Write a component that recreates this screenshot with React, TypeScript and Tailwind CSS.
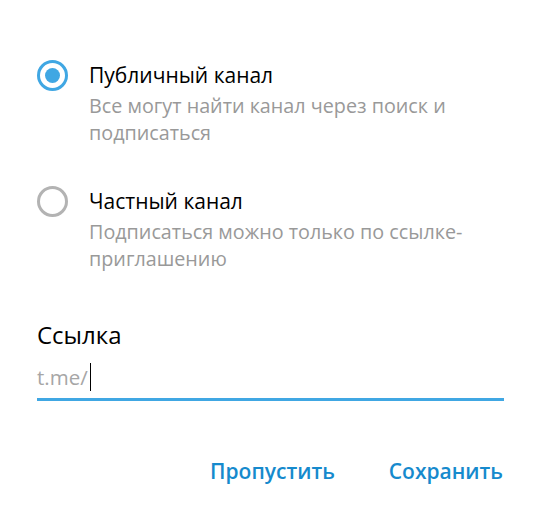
import React from "react";

function Radio({ checked }: { checked: boolean }) {
  return checked ? (
    <div className="w-[31px] h-[31px] rounded-full border-[3px] border-[#40a7e3] flex items-center justify-center shrink-0">
      <div className="w-[15px] h-[15px] rounded-full bg-[#40a7e3]" />
    </div>
  ) : (
    <div className="w-[31px] h-[31px] rounded-full border-[3px] border-[#b3b3b3] shrink-0" />
  );
}

function Option({ checked, title, desc }: { checked: boolean; title: string; desc: string }) {
  return (
    <div className="flex items-start gap-[21px]">
      <Radio checked={checked} />
      <div className="flex flex-col">
        <div className="text-[21px] leading-[31px] text-black">{title}</div>
        <div className="mt-[1px] text-[19.75px] leading-[27px] text-[#999999]">{desc}</div>
      </div>
    </div>
  );
}

export default function App() {
  return (
    <div
      className="w-[533px] h-[512px] bg-white flex flex-col pl-[37px] pr-[29px] pt-[60px]"
      style={{ fontFamily: '"Open Sans", sans-serif' }}
    >
      <div className="flex flex-col gap-[40px] pr-[40px]">
        <Option
          checked
          title="Публичный канал"
          desc="Все могут найти канал через поиск и подписаться"
        />
        <Option
          checked={false}
          title="Частный канал"
          desc="Подписаться можно только по ссылке-приглашению"
        />
      </div>
      <div className="mt-[47px] text-[24px] leading-[32px] text-black">Ссылка</div>
      <div className="mt-[11px] flex items-center h-[30px] border-b-[3px] border-[#40a7e3] pb-[6px] box-content">
        <span className="text-[20.5px] text-[#a6a6a6]">t.me/</span>
        <span className="w-[1px] h-[28px] bg-black ml-[2px]" />
      </div>
      <div className="mt-[55px] flex justify-end gap-[54px] pr-[1px]">
        <button className="text-[21px] leading-[30px] font-semibold text-[#168acd]">Пропустить</button>
        <button className="text-[21px] leading-[30px] font-semibold text-[#168acd]">Сохранить</button>
      </div>
    </div>
  );
}
